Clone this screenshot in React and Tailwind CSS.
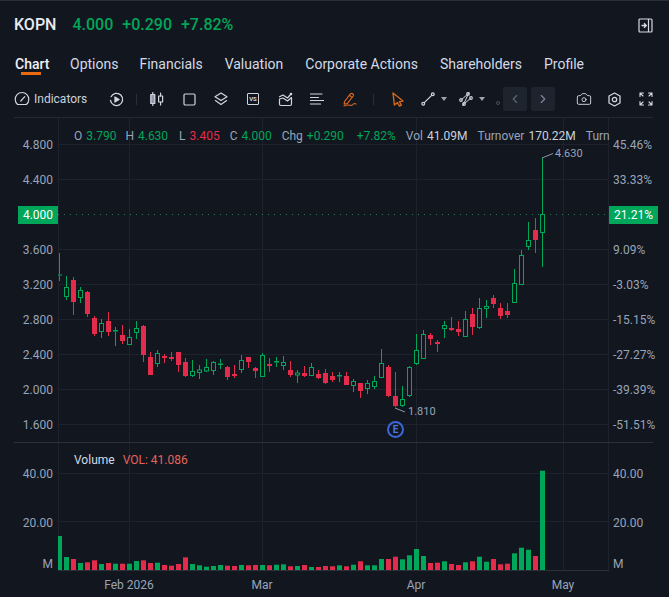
import { Camera, ChevronLeft, ChevronRight } from "lucide-react";

// color, high, low, body top, body bottom, volume bar height (all in page pixels)
const candles = [
  ["g", 253, 281, 274.5, 275.5, 34], ["g", 276, 300, 287.5, 296.5, 13], ["r", 277, 315, 280, 302, 11], ["g", 287, 303, 290.5, 297.5, 7],
  ["r", 291, 317, 292, 314, 7.7], ["r", 316, 336, 318, 334, 9.7], ["g", 319, 338, 323.5, 331.5, 6], ["r", 312, 336, 321, 332, 7],
  ["g", 327, 346, 330, 331.5, 6.3], ["r", 325, 344, 335, 341, 6.3], ["g", 329, 345, 337.5, 344.5, 6.3], ["g", 321, 339, 328.5, 332.5, 9],
  ["r", 325, 362, 326, 355, 9.7], ["r", 352, 375, 357, 375, 7], ["g", 350, 367, 353.5, 363.5, 7.3], ["r", 354, 363, 356, 358, 5],
  ["r", 352, 361, 357, 359, 4.3], ["r", 352, 372, 352, 365, 6], ["r", 358, 377, 362, 376, 12.7], ["g", 360, 377, 371.5, 375.5, 6],
  ["g", 365, 379, 370, 372.5, 4.7], ["g", 359, 372, 367.5, 371, 3.3], ["g", 361, 375, 362.5, 370.5, 4], ["g", 359, 369, 363.5, 365, 5],
  ["r", 366, 380, 367, 377, 4.3], ["r", 365, 378, 374, 376, 4], ["g", 355, 373, 360.5, 369.5, 5], ["r", 357, 368, 357, 362, 4.7],
  ["r", 367, 378, 368, 371, 5], ["g", 353, 377, 355.5, 376.5, 5], ["r", 358, 372, 364, 366, 4.7], ["g", 357, 367, 361, 362.5, 5.3],
  ["g", 356, 370, 362.5, 365.5, 5.7], ["r", 361, 377, 370, 375, 3.7], ["g", 370, 383, 373, 375, 4], ["r", 366, 377, 373, 376, 5],
  ["g", 363, 376, 367.5, 375.5, 3], ["r", 370, 379, 374, 378, 3], ["r", 369, 384, 373, 383, 4], ["r", 372, 382, 376, 380, 3.7],
  ["g", 372, 382, 375, 376.5, 4.7], ["r", 372, 385, 376, 385, 3.7], ["g", 379, 392, 381.5, 385.5, 5.3], ["r", 383, 398, 383, 391, 8.7],
  ["g", 380, 394, 383.5, 388.5, 4.7], ["g", 376, 389, 381.5, 386.5, 4.7], ["g", 349, 378, 363.5, 377.5, 11], ["r", 365, 397, 367, 396, 11],
  ["r", 372, 407, 396, 406, 13.3], ["g", 386, 407, 399.5, 405.5, 10.7], ["g", 366, 397, 367.5, 395.5, 14.7], ["g", 334, 365, 350.5, 363.5, 21],
  ["g", 330, 358, 334.5, 358.5, 14], ["r", 333, 345, 335, 339, 7], ["r", 340, 352, 342, 344, 7.3], ["g", 321, 338, 325.5, 328.5, 8.7],
  ["r", 317, 331, 328, 330, 6], ["r", 321, 336, 329, 332, 5], ["g", 311, 337, 319.5, 336.5, 7.7], ["r", 308, 335, 314, 327, 8.7],
  ["g", 298, 329, 308.5, 327.5, 13.3], ["g", 300, 318, 306.5, 308.5, 8.3], ["r", 295, 308, 298, 304, 11], ["r", 303, 319, 308, 316, 5.7],
  ["r", 303, 318, 311, 315, 6.3], ["g", 269, 303, 283.5, 302.5, 16.7], ["g", 250, 285, 255.5, 284.5, 22.3], ["g", 222, 250, 240.5, 246.5, 20.3],
  ["r", 218, 253, 230, 240, 14], ["g", 158, 267, 214.5, 232.5, 99.3],
];

const GREEN = "#00a65a";
const RED = "#e32b4b";
const GRID = "#1d222c";
const vLines = [58.5, 129.5, 262.5, 416.5, 563.5, 608.5];
const priceLines = [144.5, 179.5, 249.5, 284.5, 319.5, 354.5, 389.5, 424.5];

const leftPrices = ["4.800", "4.400", "4.000", "3.600", "3.200", "2.800", "2.400", "2.000", "1.600"];
const rightPcts = ["45.46%", "33.33%", "21.21%", "9.09%", "-3.03%", "-15.15%", "-27.27%", "-39.39%", "-51.51%"];
const tabs = ["Financials", "Valuation", "Corporate Actions", "Shareholders", "Profile"];

function Candle({ c, i }) {
  const [kind, hi, lo, top, bot] = c;
  const x = 59.5 + i * 7;
  const col = kind === "g" ? GREEN : RED;
  const flat = bot - top < 2;
  return (
    <g>
      <line x1={x} x2={x} y1={hi} y2={top} stroke={col} />
      <line x1={x} x2={x} y1={bot} y2={lo} stroke={col} />
      {kind === "r" || flat ? (
        <rect x={x - 2.5} y={top} width="5" height={Math.max(bot - top, 1)} fill={col} />
      ) : (
        <rect x={x - 2} y={top} width="4" height={bot - top} fill="#12161f" stroke={col} />
      )}
    </g>
  );
}

function PriceChart() {
  return (
    <svg width="551" height="324" viewBox="58 118 551 324" className="block">
      {vLines.map((x) => <line key={x} x1={x} x2={x} y1="118" y2="442" stroke={GRID} />)}
      {priceLines.map((y) => <line key={y} x1="58" x2="609" y1={y} y2={y} stroke={GRID} />)}
      <line x1="58" x2="609" y1="214.5" y2="214.5" stroke="#2a7a5a" strokeDasharray="1 5" />
      {candles.map((c, i) => <Candle key={i} c={c} i={i} />)}
      <path d="M542 158 L553 153.5" stroke="#8d97a8" fill="none" />
      <path d="M395 408 L405 412" stroke="#8d97a8" fill="none" />
    </svg>
  );
}

function VolumeChart() {
  return (
    <svg width="551" height="127" viewBox="58 443 551 127" className="block">
      {vLines.map((x) => <line key={x} x1={x} x2={x} y1="443" y2="570" stroke={GRID} />)}
      <line x1="58" x2="609" y1="473.5" y2="473.5" stroke={GRID} />
      <line x1="58" x2="609" y1="521.5" y2="521.5" stroke={GRID} />
      {candles.map((c, i) => (
        <rect key={i} x={57 + i * 7} y={570 - c[5]} width="5" height={c[5]} fill={c[0] === "g" ? GREEN : RED} />
      ))}
    </svg>
  );
}

const Ico = ({ children, size = 16, box = 16, className = "" }) => (
  <svg width={size} height={size} viewBox={`0 0 ${box} ${box}`} fill="none" stroke="currentColor" strokeWidth="1.2" strokeLinecap="round" strokeLinejoin="round" className={className}>
    {children}
  </svg>
);

const Slot = ({ children, className = "w-[32px]" }) => (
  <div className={`flex h-[24px] shrink-0 items-center justify-center ${className}`}>{children}</div>
);

function Caret({ className }) {
  return (
    <svg width="6" height="4" viewBox="0 0 6 4" className={`shrink-0 ${className}`}>
      <path d="M0 0 H6 L3 4 Z" fill="#9aa3b2" />
    </svg>
  );
}

function Toolbar() {
  return (
    <div className="flex h-[24px] items-center pl-[14px] text-[#d0d6e0]">
      <Ico size={16}>
        <path d="M3.6 13.5 A6.8 6.8 0 1 1 12.4 13.5 Z" />
        <path d="M6.8 10 L10.8 5.6" />
      </Ico>
      <span className="ml-[4px] w-[54px] text-[12px] whitespace-nowrap text-[#c9d1de]">Indicators</span>
      <Slot className="ml-[12px] w-[32px]">
        <Ico size={15}>
          <path d="M2.2 5 A6.5 6.5 0 1 1 1.6 9" strokeWidth="1.4" />
          <path d="M6.3 5.2 L10.8 8 L6.3 10.8 Z" fill="currentColor" />
        </Ico>
      </Slot>
      <div className="ml-[4px] h-[11px] w-px shrink-0 bg-[#2a303b]" />
      <Slot className="ml-[4px] w-[32px]">
        <Ico size={14} box={14}>
          <rect x="0.8" y="2.5" width="4" height="9" fill="#8f98a8" />
          <path d="M2.8 0.5 V2.5 M2.8 11.5 V13.5 M10.6 1 V4 M10.6 10 V13" />
          <rect x="8.6" y="4" width="4" height="6" />
        </Ico>
      </Slot>
      <Slot>
        <Ico size={13} box={13}><rect x="1" y="1" width="11" height="11" rx="1.2" /></Ico>
      </Slot>
      <Slot>
        <Ico size={14} box={14}>
          <path d="M7 1 L13 4.8 L7 8.6 L1 4.8 Z" />
          <path d="M1.4 8.6 L7 12.6 L12.6 8.6" />
        </Ico>
      </Slot>
      <Slot>
        <div className="flex h-[12px] w-[12px] items-center justify-center rounded-[1px] border border-[#d0d6e0] text-[6px] leading-none font-bold">VS</div>
      </Slot>
      <Slot>
        <Ico size={15} box={15}>
          <path d="M1.5 7 V12 Q1.5 13.5 3 13.5 H12 Q13.5 13.5 13.5 12 V5.5 L9.5 9 L5 6 Z" />
          <path d="M1.5 4.8 L5 3 L9.5 6 L13 2" />
          <circle cx="13" cy="2" r="0.7" />
        </Ico>
      </Slot>
      <Slot>
        <Ico size={14} box={14}>
          <path d="M0.5 2 H12 M0.5 5.5 H8.5 M0.5 8.5 H13.5 M0.5 12 H10.5" />
        </Ico>
      </Slot>
      <Slot>
        <Ico size={15} box={15} className="text-[#d8661a]">
          <path d="M2.5 9.5 L8.5 1.8 Q9.5 0.8 10.8 1.8 Q12 2.8 11.2 4 L5.2 11.6 L2.2 12.2 Z" />
          <path d="M7.4 3.2 L10 5.4" />
          <path d="M2 14 Q6 12.5 8 13.2 Q10 14 11.5 12 Q12.5 11 14 12" />
        </Ico>
      </Slot>
      <div className="ml-[8px] h-[11px] w-px shrink-0 bg-[#2a303b]" />
      <Slot className="ml-[8px] w-[32px]">
        <svg width="12" height="15" viewBox="0 0 12 15" fill="none" stroke="#d8661a" strokeWidth="1.4" strokeLinejoin="round">
          <path d="M1 1 L11 9 L7.4 9.6 L9.4 13 L7.4 14 L5.4 10.6 L2.4 13 Z" />
        </svg>
      </Slot>
      <Slot className="ml-[6px] w-[16px]">
        <Ico size={14} box={14}>
          <circle cx="2.2" cy="11.8" r="1.4" />
          <circle cx="11.8" cy="2.2" r="1.4" />
          <path d="M3.3 10.7 L10.7 3.3" />
        </Ico>
      </Slot>
      <Caret className="ml-[5px]" />
      <Slot className="ml-[11px] w-[16px]">
        <Ico size={14} box={14}>
          <circle cx="2" cy="8" r="1.3" />
          <circle cx="9" cy="1.9" r="1.3" />
          <circle cx="5" cy="12" r="1.3" />
          <circle cx="12" cy="6" r="1.3" />
          <path d="M3 7.2 L8 2.8 M6 11.1 L11 6.8 M10 .6 L4 13.4" strokeWidth="1" />
        </Ico>
      </Slot>
      <Caret className="ml-[5px]" />
      <div className="flex h-[24px] w-[18px] shrink-0 items-end justify-end pr-[3px] pb-[6px]">
        <div className="h-[4px] w-[4px] rounded-full border border-[#4a505c]" />
      </div>
      <div className="flex h-[24px] w-[24px] shrink-0 items-center justify-center rounded-[2px] bg-[#1e242e] text-[#5d6675]">
        <ChevronLeft size={14} />
      </div>
      <div className="ml-[4px] flex h-[24px] w-[24px] shrink-0 items-center justify-center rounded-[2px] bg-[#1e242e] text-[#7f8896]">
        <ChevronRight size={14} />
      </div>
      <Slot className="ml-[20px] w-[18px]"><Camera size={16} strokeWidth={1.4} /></Slot>
      <Slot className="ml-[12px] w-[18px]">
        <Ico size={15} box={15}>
          <path d="M7.5 1 L13 4 V11 L7.5 14 L2 11 V4 Z" strokeWidth="1.3" />
          <circle cx="7.5" cy="7.5" r="2.2" strokeWidth="1.3" />
        </Ico>
      </Slot>
      <Slot className="ml-[14px] w-[18px]">
        <Ico size={14} box={14} className="text-[#d5dae3]">
          <path d="M1 4.5 V1 H4.5 M1 1 L4 4 M9.5 1 H13 V4.5 M13 1 L10 4 M1 9.5 V13 H4.5 M1 13 L4 10 M13 9.5 V13 H9.5 M13 13 L10 10" strokeWidth="1.1" />
        </Ico>
      </Slot>
    </div>
  );
}

const Stat = ({ label, value, color = "text-[#00a65a]", className = "" }) => (
  <span className={`flex shrink-0 gap-[4px] ${className}`}>
    <span className="text-[#98a4b8]">{label}</span>
    <span className={color}>{value}</span>
  </span>
);

export default function App() {
  return (
    <div className="flex h-[597px] w-[669px] flex-col overflow-hidden border-t border-[#2a2f3a] bg-[#12161f] font-['Roboto',sans-serif] text-[12px]">
      {/* quote header */}
      <div className="flex h-[48px] shrink-0 items-center justify-between pr-[16px] pl-[14px]">
        <div className="flex items-center text-[16px] font-medium">
          <span className="text-[#e6ebf3]">KOPN</span>
          <span className="ml-[16px] text-[#00a65a]">4.000</span>
          <span className="ml-[9px] text-[#00a65a]">+0.290</span>
          <span className="ml-[9px] text-[#00a65a]">+7.82%</span>
        </div>
        <svg width="15" height="15" viewBox="0 0 15 15" fill="none" stroke="#d5dae3" strokeWidth="1.2">
          <rect x="1" y="1" width="13" height="13" rx="1" />
          <path d="M10.5 1 V14" />
          <path d="M3.5 7.5 H8 M6 5.3 L8.2 7.5 L6 9.7" strokeWidth="1.4" />
        </svg>
      </div>

      {/* tabs */}
      <div className="flex h-[30px] shrink-0 items-center gap-[22px] pl-[15px] text-[14px] text-[#d3dae6]">
        <div className="relative w-[33px] font-medium whitespace-nowrap text-[#eef1f6]">
          Chart
          <div className="absolute top-[18px] left-[6px] h-[3px] w-[20px] bg-[#ea6a12]" />
        </div>
        <div className="-mr-[1px] whitespace-nowrap">Options</div>
        {tabs.map((t) => (
          <div key={t} className="whitespace-nowrap">{t}</div>
        ))}
      </div>

      <div className="mt-[8px] shrink-0"><Toolbar /></div>

      <div className="mt-[6px] ml-[14px] w-[639px] border-t border-[#242933]">
        {/* price pane */}
        <div className="flex h-[325px] border-b border-[#2b303b]">
          <div className="w-[44px] shrink-0 pt-[9px] text-[#98a4b8]">
            {leftPrices.map((p) => (
              <div key={p} className="flex h-[35px] items-center justify-end">
                {p === "4.000" ? (
                  <span className="flex h-[18px] w-[40px] items-center justify-center bg-[#00a65a] text-white">{p}</span>
                ) : (
                  <span className="pr-[5px]">{p}</span>
                )}
              </div>
            ))}
          </div>
          <div className="relative w-[551px] shrink-0">
            <PriceChart />
            <div className="absolute top-[9px] left-[16px] flex whitespace-nowrap">
              <Stat label="O" value="3.790" />
              <Stat label="H" value="4.630" className="ml-[9px]" />
              <Stat label="L" value="3.405" color="text-[#e32b4b]" className="ml-[11px]" />
              <Stat label="C" value="4.000" className="ml-[10px]" />
              <Stat label="Chg" value="+0.290" className="ml-[10px]" />
              <span className="ml-[13px] shrink-0 text-[#00a65a]">+7.82%</span>
              <Stat label="Vol" value="41.09M" color="text-[#c9d1de]" className="ml-[10px]" />
              <Stat label="Turnover" value="170.22M" color="text-[#c9d1de]" className="ml-[10px]" />
              <span className="ml-[10px] shrink-0 text-[#98a4b8]">Turn</span>
            </div>
            <span className="absolute top-[28px] left-[497px] text-[11px] text-[#98a4b8]">4.630</span>
            <span className="absolute top-[286px] left-[350px] text-[11px] text-[#98a4b8]">1.810</span>
            <div className="absolute top-[303px] left-[329px] flex h-[17px] w-[17px] items-center justify-center rounded-full border-2 border-[#3a66d8] text-[10px] font-bold text-[#4a76e8]">E</div>
          </div>
          <div className="w-[44px] shrink-0 pt-[9px] text-[#98a4b8]">
            {rightPcts.map((p) => (
              <div key={p} className="flex h-[35px] items-center">
                {p === "21.21%" ? (
                  <span className="flex h-[18px] w-[49px] shrink-0 items-center pl-[5px] whitespace-nowrap bg-[#00a65a] text-white">{p}</span>
                ) : (
                  <span className="pl-[4px] whitespace-nowrap">{p}</span>
                )}
              </div>
            ))}
          </div>
        </div>

        {/* volume pane */}
        <div className="flex h-[127px]">
          <div className="w-[44px] shrink-0 text-right text-[#98a4b8]">
            <div className="mt-[24px] h-[14px] pr-[5px] leading-[14px]">40.00</div>
            <div className="mt-[35px] h-[14px] pr-[5px] leading-[14px]">20.00</div>
            <div className="mt-[27px] h-[14px] pr-[5px] leading-[14px]">M</div>
          </div>
          <div className="relative w-[551px] shrink-0">
            <VolumeChart />
            <div className="absolute top-[8px] left-[16px] flex gap-[8px] whitespace-nowrap">
              <span className="text-[#d3dae6]">Volume</span>
              <span className="text-[#e5645a]">VOL: 41.086</span>
            </div>
          </div>
          <div className="w-[44px] shrink-0 pl-[4px] text-[#98a4b8]">
            <div className="mt-[24px] h-[14px] leading-[14px]">40.00</div>
            <div className="mt-[35px] h-[14px] leading-[14px]">20.00</div>
            <div className="mt-[27px] h-[14px] leading-[14px]">M</div>
          </div>
        </div>

        {/* date axis */}
        <div className="ml-[44px] flex w-[551px] border-t border-[#2b303b] pt-[7px] leading-[14px] text-[#98a4b8]">
          <span className="ml-[21px] w-[100px] shrink-0 text-center">Feb 2026</span>
          <span className="ml-[33px] w-[100px] shrink-0 text-center">Mar</span>
          <span className="ml-[54px] w-[100px] shrink-0 text-center">Apr</span>
          <span className="ml-[47px] w-[100px] shrink-0 text-center">May</span>
        </div>
      </div>
    </div>
  );
}
